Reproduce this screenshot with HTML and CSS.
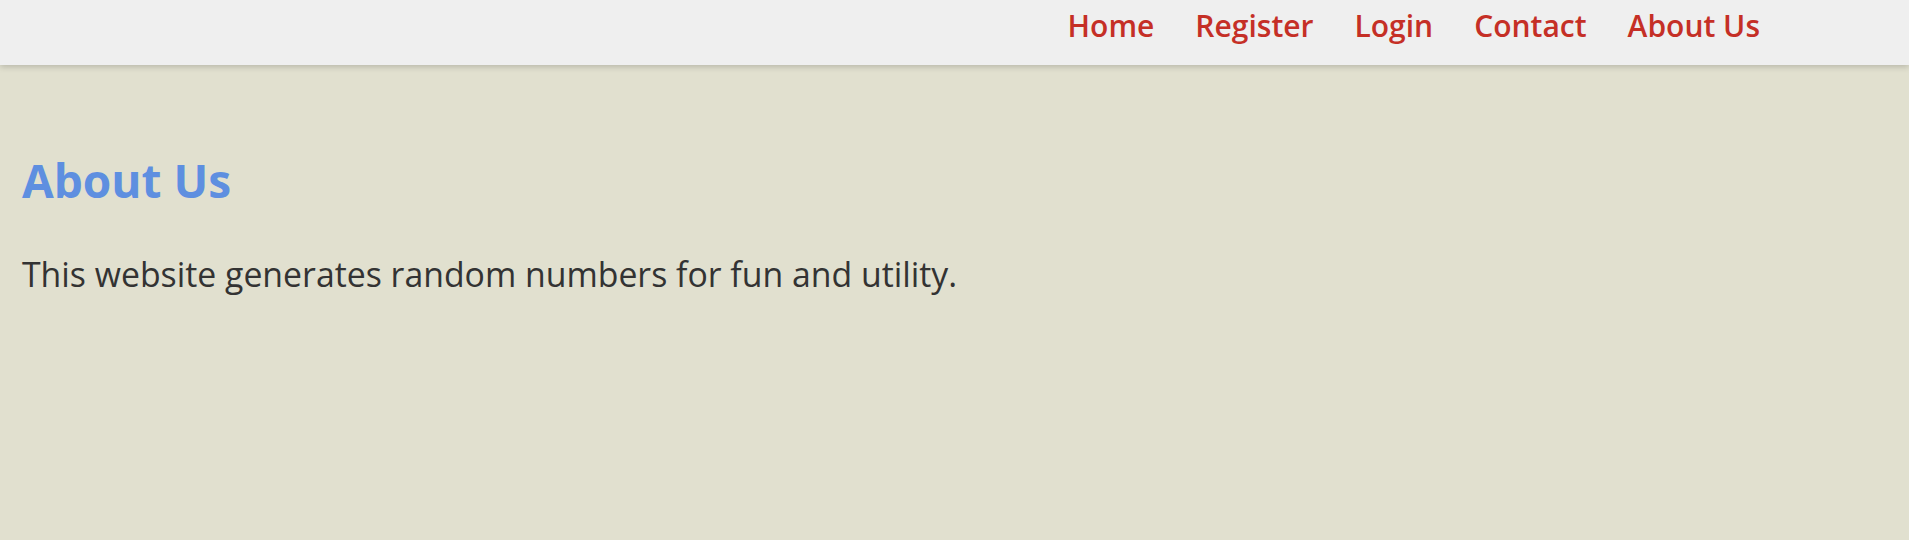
FILE: index.html
```html
<!DOCTYPE html>
<html lang="en">
<head>
<meta charset="utf-8">
<title>About Us</title>
<link rel="stylesheet" href="styles.css">
</head>
<body>
<header class="topbar">
  <nav class="nav">
    <a href="#" class="nav-link">Home</a>
    <a href="#" class="nav-link">Register</a>
    <a href="#" class="nav-link">Login</a>
    <a href="#" class="nav-link">Contact</a>
    <a href="#" class="nav-link">About Us</a>
  </nav>
</header>
<main class="content">
  <h1 class="title">About Us</h1>
  <p class="text">This website generates random numbers for fun and utility.</p>
</main>
</body>
</html>
```
FILE: styles.css
```css
html, body {
  margin: 0;
  padding: 0;
  height: 100%;
}
body {
  background: #e1e0cf;
  font-family: "Open Sans", "Noto Sans", sans-serif;
  color: #333333;
}
.topbar {
  height: 65px;
  background: #efefef;
  box-shadow: 0 2px 6px rgba(0, 0, 0, 0.18);
  display: flex;
  justify-content: flex-end;
  align-items: flex-start;
  padding-right: 149px;
}
.nav {
  display: flex;
  gap: 41px;
  padding-top: 4px;
}
.nav-link {
  color: #c52f26;
  text-decoration: none;
  font-weight: 600;
  font-size: 30px;
  line-height: 44px;
}
.content {
  padding: 0 22px;
}
.title {
  margin: 0;
  padding-top: 83px;
  color: #5e8fe0;
  font-size: 46px;
  font-weight: 700;
  line-height: 64px;
}
.text {
  margin: 40px 0 0;
  font-size: 33.8px;
  line-height: 44px;
}
```
